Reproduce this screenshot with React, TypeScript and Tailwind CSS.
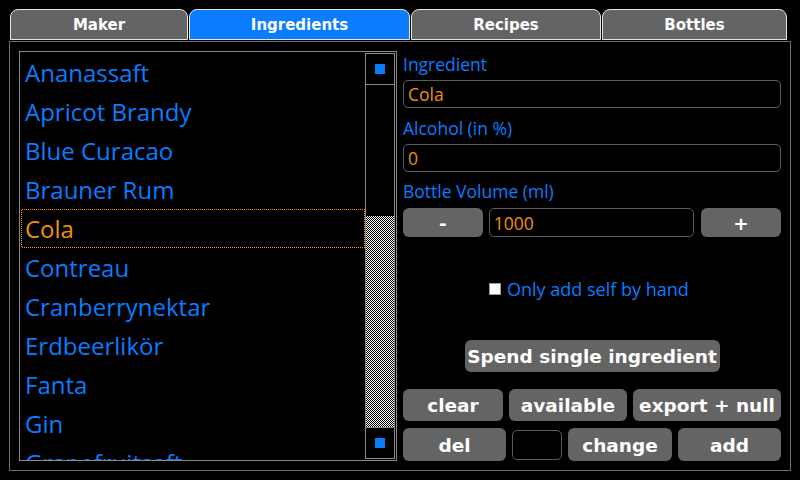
import React from "react";

const ingredients = [
    "Ananassaft",
    "Apricot Brandy",
    "Blue Curacao",
    "Brauner Rum",
    "Cola",
    "Contreau",
    "Cranberrynektar",
    "Erdbeerlikör",
    "Fanta",
    "Gin",
    "Grapefruitsaft",
];

const tabs = [
    { name: "Maker", w: "w-[178px]", active: false },
    { name: "Ingredients", w: "w-[221px]", active: true },
    { name: "Recipes", w: "w-[190px]", active: false },
    { name: "Bottles", w: "w-[185px]", active: false },
];

const Btn = ({ label, className }: { label: string; className: string }) => (
    <div
        className={`flex items-center justify-center pt-[2px] rounded-[6px] bg-[#646464] text-white font-bold text-[18.5px] font-['DejaVu_Sans',sans-serif] ${className}`}
    >
        {label}
    </div>
);

const App = () => {
    const selected = "Cola";

    return (
        <div className="w-[800px] h-[480px] bg-black overflow-hidden font-['Open_Sans',sans-serif]">
            {/* Tabs */}
            <div className="flex gap-[1px] pl-[10px] pt-[9px] h-[40px]">
                {tabs.map((t) => (
                    <div
                        key={t.name}
                        className={`${t.w} h-[31px] rounded-t-[8px] border border-[#e6e6e6] flex items-center justify-center pt-[1px] text-white font-bold text-[15px] font-['DejaVu_Sans',sans-serif] ${
                            t.active ? "bg-[#0a7cff]" : "bg-[#646464]"
                        }`}
                    >
                        {t.name}
                    </div>
                ))}
            </div>

            {/* Frame */}
            <div className="ml-[9px] mt-[1px] w-[782px] h-[430px] border border-[#6e6e6e] flex gap-[6px] pl-[9px] pt-[9px]">
                {/* List */}
                <div className="w-[378px] h-[410px] border border-[#8a8a8a] flex shrink-0">
                    <div className="flex-1 overflow-hidden pt-[1px] pl-[1px]">
                        {ingredients.map((name) =>
                            name === selected ? (
                                <div
                                    key={name}
                                    className="h-[39px] w-[344px] p-[1px] bg-[repeating-conic-gradient(#ff9900_0_25%,#000000_0_50%)] bg-[length:2px_2px]"
                                >
                                    <div className="h-full bg-black pl-[3px] text-[24px] leading-[38px] whitespace-nowrap text-[#f0900a]">
                                        {name}
                                    </div>
                                </div>
                            ) : (
                                <div
                                    key={name}
                                    className="h-[39px] w-[344px] pl-[4px] pt-[1px] text-[24px] leading-[38px] whitespace-nowrap text-[#0a7cff]"
                                >
                                    {name}
                                </div>
                            )
                        )}
                    </div>
                    {/* Scrollbar */}
                    <div className="w-[30px] h-[406px] mt-[1px] mr-[1px] border border-[#8a8a8a] flex flex-col">
                        <div className="h-[31px] border-b border-[#8a8a8a] flex items-center justify-center">
                            <div className="w-[10px] h-[10px] bg-[#0a7cff]" />
                        </div>
                        <div className="h-[131px] bg-black" />
                        <div className="flex-1 bg-[repeating-conic-gradient(#ffffff_0_25%,#000000_0_50%)] bg-[length:2px_2px]" />
                        <div className="h-[31px] border-t border-[#8a8a8a] flex items-center justify-center">
                            <div className="w-[10px] h-[10px] bg-[#0a7cff]" />
                        </div>
                    </div>
                </div>

                {/* Right column */}
                <div className="w-[378px] flex flex-col text-[17.5px]">
                    <div className="h-[29px] leading-[26px] text-[#0a7cff]">Ingredient</div>
                    <div className="h-[28px] rounded-[5px] border border-[#5a5a5a] px-[4px] leading-[27px] text-[#f0900a]">
                        Cola
                    </div>
                    <div className="h-[36px] pt-[8px] leading-[24px] text-[#0a7cff]">Alcohol (in %)</div>
                    <div className="h-[28px] rounded-[5px] border border-[#5a5a5a] px-[4px] leading-[27px] text-[#f0900a]">
                        0
                    </div>
                    <div className="h-[36px] pt-[7px] leading-[24px] text-[#0a7cff]">Bottle Volume (ml)</div>
                    <div className="h-[29px] flex gap-[6px]">
                        <Btn label="-" className="w-[80px] h-[29px]" />
                        <div className="w-[206px] h-[29px] rounded-[5px] border border-[#5a5a5a] px-[4px] leading-[28px] text-[#f0900a]">
                            1000
                        </div>
                        <Btn label="+" className="w-[80px] h-[29px] ml-[1px]" />
                    </div>
                    <div className="mt-[40px] h-[24px] flex items-center gap-[6px] pl-[86px]">
                        <div className="w-[12px] h-[12px] bg-white border border-[#9a9a9a]" />
                        <span className="text-[#0a7cff] text-[18px] leading-[24px]">Only add self by hand</span>
                    </div>
                    <div className="mt-[39px] flex justify-center">
                        <Btn label="Spend single ingredient" className="w-[255px] h-[32px]" />
                    </div>
                    <div className="mt-[17px] flex gap-[6px]">
                        <Btn label="clear" className="w-[100px] h-[32px]" />
                        <Btn label="available" className="w-[118px] h-[32px]" />
                        <Btn label="export + null" className="w-[148px] h-[32px]" />
                    </div>
                    <div className="mt-[7px] flex gap-[6px]">
                        <Btn label="del" className="w-[103px] h-[33px]" />
                        <div className="w-[50px] h-[30px] mt-[2px] rounded-[5px] border border-[#5a5a5a] bg-black" />
                        <Btn label="change" className="w-[104px] h-[33px]" />
                        <Btn label="add" className="w-[103px] h-[33px]" />
                    </div>
                </div>
            </div>
        </div>
    );
};

export default App;
